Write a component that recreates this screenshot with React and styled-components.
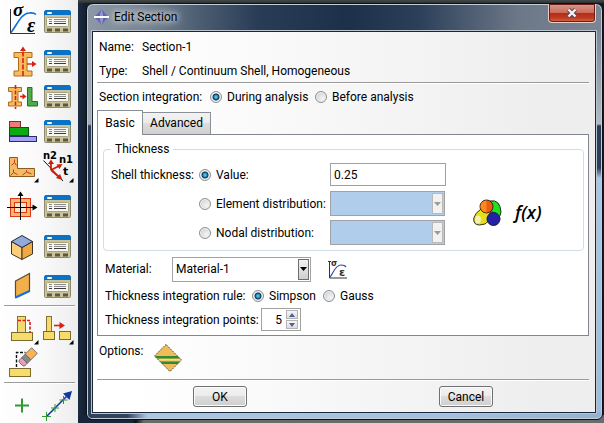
import React, { useState } from "react";
import styled, { createGlobalStyle, css } from "styled-components";

const GlobalStyle = createGlobalStyle`
  *, *::before, *::after { box-sizing: border-box; }
  body { margin: 0; }
  body, button, input, select {
    font-family: Roboto, "Open Sans", sans-serif;
    font-size: 12px;
    line-height: 16px;
    color: #000;
  }
`;

/* ---------- page ---------- */

const Page = styled.div`
  display: flex;
  min-height: 100vh;
  background: #17263b;
`;

const Toolbar = styled.aside`
  flex: none;
  width: 78px;
  padding: 5px 3px 1px 6px;
  background: linear-gradient(90deg, #fff, #f8f8f8 60%, #ededed);
`;

const ToolGroups = styled.div`
  display: flex;
  flex-direction: column;
  gap: ${(p) => p.$gap}px;
`;

const ToolRow = styled.div`
  display: flex;
  gap: 1px;
`;

const ToolButton = styled.button`
  display: flex;
  align-items: center;
  justify-content: center;
  width: 34px;
  height: 34px;
  padding: 0;
  border: 0;
  background: none;
`;

const ToolDivider = styled.hr`
  height: 2px;
  margin: 1px 0 4px -2px;
  border: 0;
  border-top: 1px solid #9c9c9c;
  border-bottom: 1px solid #fff;
`;

const Workspace = styled.main`
  flex: 1;
  min-width: 0;
  padding: 3px 1px 3px 8px;
  background:
    linear-gradient(#45494a, #2b3233) top / 100% 3px no-repeat,
    linear-gradient(100deg, #17263b 54px, #0d1116 58px, #6a6b6b 66px) bottom / 100% 8px no-repeat,
    linear-gradient(90deg, #1c2c43, #131f30 8px, #131a22);
`;

/* ---------- dialog frame ---------- */

const Dialog = styled.section`
  display: flex;
  flex-direction: column;
  padding: 0 6px 6px 5px;
  border: 1px solid #0b1119;
  border-radius: 7px 7px 6px 6px;
  box-shadow: inset 0 0 0 1px #c3cdd8;
  background:
    linear-gradient(90deg, #8d99a6 0, #748291 60px, #4e5f73 110px, #2a3d56 170px, #1d3049 260px, #2b3f59 330px, #6c7787 430px, #7b8594) top / 100% 28px no-repeat,
    linear-gradient(90deg, #30435c 40px, #a9c6e5 60px, #a1c0e3 70%, #93b1d3) bottom / 100% 7px no-repeat,
    linear-gradient(#8d99a6, #a4acb5 120px, #2c3e57 122px, #2a3c54) left / 8px 100% no-repeat,
    linear-gradient(#6c7787, #b3bac3 120px, #2c3e57 122px, #2c3e57 164px, #a9c6e5 174px, #9dbbdc) right / 8px 100% no-repeat;
`;

const TitleBar = styled.header`
  display: flex;
  align-items: flex-start;
  height: 27px;
  padding-left: 2px;
`;

const TitleText = styled.h1`
  display: flex;
  align-items: center;
  gap: 5px;
  flex: 1;
  height: 26px;
  margin: 0;
  font-size: 12px;
  font-weight: 400;
  text-shadow: 0 0 5px #dfe5ea, 0 0 8px #cfd6dd, 0 0 12px #c4ccd4;
`;

const CloseButton = styled.button`
  display: flex;
  align-items: center;
  justify-content: center;
  width: 48px;
  height: 19px;
  padding: 0;
  border: 1px solid #e6cdca;
  border-top: 0;
  border-radius: 0 0 4px 4px;
  box-shadow: inset 0 0 0 1px #6b2019;
  background: linear-gradient(#d99a8f, #cc6a5b 48%, #b52a14 50%, #bd3a20 75%, #d0694c);
`;

const Content = styled.div`
  padding: 3px 6px 0 4px;
  border: 1px solid #1b2737;
  outline: 1px solid #b9c3ce;
  background: linear-gradient(90deg, #fff 8%, #eeeeee 90%);
`;

const Row = styled.div`
  display: flex;
  align-items: center;
  height: ${(p) => p.$h || 24}px;
  padding-left: ${(p) => p.$indent || 0}px;
`;

const Label = styled.label`
  flex: none;
  width: ${(p) => (p.$w ? p.$w + "px" : "auto")};
  white-space: nowrap;
`;

const Value = styled.span`
  white-space: nowrap;
`;

const Divider = styled.hr`
  height: 2px;
  margin: 0;
  border: 0;
  border-top: 1px solid #9a9a9a;
  border-bottom: 1px solid #fff;
`;

/* ---------- form controls ---------- */

const RadioLabel = styled.label`
  display: flex;
  align-items: center;
  gap: 5px;
  flex: none;
  width: ${(p) => (p.$w ? p.$w + "px" : "auto")};
  white-space: nowrap;
`;

const RadioInput = styled.input.attrs({ type: "radio" })`
  appearance: none;
  flex: none;
  width: 12px;
  height: 12px;
  margin: 0;
  border: 1px solid #8c8f92;
  border-radius: 50%;
  box-shadow: inset 0 0 0 1px #f4f4f4;
  background: radial-gradient(circle at 65% 65%, #f4f4f4, #c4c8cc);

  &:checked {
    background: radial-gradient(circle, #7fd4f2 0, #1f86b4 2px, #0d3350 3px, #14405f 3px, #dfe3e6 4px);
  }
`;

const TextInput = styled.input`
  width: 116px;
  height: 23px;
  padding: 0 3px;
  border: 1px solid #a0a0a0;
  background: #fff;
`;

const SelectFrame = styled.span`
  display: grid;
  grid-template-columns: 1fr auto;
  align-items: center;
  width: ${(p) => p.$w}px;
  height: 25px;
  padding: 1px;
  border: 1px solid #a0a2a6;
  background: ${(p) => (p.$off ? "#b0cdec" : "#fff")};
`;

const NativeSelect = styled.select`
  appearance: none;
  grid-area: 1 / 1 / 2 / 3;
  width: 100%;
  height: 21px;
  padding: 0 14px 0 2px;
  border: 0;
  outline: 0;
  background: transparent;
`;

const ArrowBox = styled.span`
  grid-area: 1 / 2;
  display: flex;
  align-items: center;
  justify-content: center;
  width: 11px;
  height: 21px;
  pointer-events: none;
  ${(p) =>
    p.$off
      ? css`
          border: 1px solid #b9b9b9;
          background: #f2f2f2;
        `
      : css`
          border: 1px solid #6e6e6e;
          background: linear-gradient(#f2f2f2, #cfcfcf);
        `}
`;

const Spinner = styled.span`
  display: flex;
  align-items: center;
  width: 40px;
  height: 23px;
  padding: 1px 2px;
  border: 1px solid #a0a0a0;
  background: #fff;
`;

const SpinnerInput = styled.input`
  flex: 1;
  min-width: 0;
  height: 19px;
  padding: 0 4px 0 0;
  border: 0;
  background: none;
  text-align: right;
`;

const SpinnerButtons = styled.span`
  display: flex;
  flex-direction: column;
  gap: 1px;
`;

const SpinnerButton = styled.button`
  display: flex;
  align-items: center;
  justify-content: center;
  width: 12px;
  height: 9px;
  padding: 0;
  border: 1px solid #b4b4b4;
  background: linear-gradient(#f6f6f6, #dcdcdc);
`;

const IconButton = styled.button`
  display: flex;
  flex: none;
  padding: 0;
  border: 0;
  background: none;
`;

const PushButton = styled.button`
  width: 54px;
  height: 21px;
  padding: 0;
  border: 1px solid #707070;
  border-radius: 3px;
  box-shadow: inset 0 0 0 1px #fbfbfb;
  background: linear-gradient(#f3f3f3, #ebebeb 49%, #dcdcdc 50%, #cfcfcf);
`;

/* ---------- tabs and panel ---------- */

const TabList = styled.div`
  display: flex;
  align-items: flex-end;
  height: 24px;
`;

const Tab = styled.button`
  width: ${(p) => p.$w}px;
  height: ${(p) => (p.$active ? 25 : 22)}px;
  margin-bottom: ${(p) => (p.$active ? -1 : 0)}px;
  padding: 0 0 1px;
  border: 1px solid #8b8f98;
  border-bottom: 0;
  border-left-width: ${(p) => (p.$active ? 1 : 0)}px;
  background: ${(p) =>
    p.$active ? "#fff" : "linear-gradient(#f2f2f2, #ebebeb 49%, #dddddd 50%, #d0d0d0)"};
  position: relative;
`;

const TabPanel = styled.div`
  padding: 6px 4px 0 5px;
  border: 1px solid #82868f;
  background: #fff;
`;

const Group = styled.fieldset`
  display: grid;
  grid-template-columns: auto 1fr;
  align-items: center;
  min-width: 0;
  margin: 0;
  padding: 3px 8px 3px 7px;
  border: 1px solid #d3dde6;
  border-radius: 4px;
`;

const Legend = styled.legend`
  padding: 0 4px;
`;

const ThicknessRows = styled.div`
  display: flex;
  flex-direction: column;
`;

const FunctionTools = styled.div`
  display: flex;
  align-items: center;
  gap: 8px;
  padding: 18px 0 0 27px;
`;

const OptionsRow = styled.div`
  display: flex;
  align-items: flex-start;
  height: 43px;
  padding: 7px 0 0 2px;
`;

const Footer = styled.footer`
  display: grid;
  grid-template-columns: 1fr 1fr;
  justify-items: center;
  padding: 5px 0;
`;

/* ---------- icons ---------- */

const Icon = ({ children, w = 34, h = 34 }) => (
  <svg width={w} height={h} viewBox={`0 0 ${w} ${h}`} fill="none" overflow="visible" aria-hidden="true">
    {children}
  </svg>
);

const Corner = ({ y = 28 }) => <path d={`M32.500 ${y}v4.500h-4.500z`} fill="#000" />;

const ManagerIcon = () => (
  <Icon w={28} h={24}>
    <rect x="0.500" y="1.500" width="26" height="21" rx="1" fill="#c9c29c" stroke="#8d8a72" />
    <path d="M0 1.500 1.500 0h24L27 1.500V5H0z" fill="#0a72c4" />
    <rect x="3" y="2" width="5" height="2" rx="1" fill="#fff" />
    <rect x="2.500" y="7.500" width="22" height="9" rx="1" fill="#f6f6f2" stroke="#a8a480" />
    <path d="M5 9.500h3M10 9.500h12M5 11.500h3M10 11.500h12" stroke="#8a8a8a" />
    <path d="M5 13.500h3M10 13.500h12" stroke="#3c3c3c" />
    <path d="M3 18.500h5v3H3zM11 18.500h5v3h-5zM19 18.500h5v3h-5z" fill="#5f5836" />
  </Icon>
);

const StressStrainIcon = () => (
  <Icon>
    <path d="M4.500 4v24.500H29" stroke="#333" />
    <path d="M5 27.500C11 20 15 8.500 23 8q5-.5 7 1.500" stroke="#0b6fd6" strokeWidth="1.600" />
    <text x="7" y="11" fontFamily="Liberation Serif" fontSize="19" fontWeight="700" fontStyle="italic" fill="#000">σ</text>
    <text x="21" y="27" fontFamily="Liberation Serif" fontSize="20" fontWeight="700" fontStyle="italic" fill="#000">ε</text>
  </Icon>
);

const BeamSectionIcon = () => (
  <Icon>
    <path d="M8 7.500h18v5h-5V26h5v5H8v-5h4.500V12.500H8z" fill="#f7bc5c" stroke="#b06a1e" strokeLinejoin="round" />
    <path d="M17 31V5" stroke="#d8200e" strokeWidth="1.600" strokeDasharray="5 1.500" />
    <path d="M17 1.500 20 6h-6zM30.500 19 26 22v-6z" fill="#d8200e" />
    <path d="M21 19h6" stroke="#d8200e" strokeWidth="1.400" />
  </Icon>
);

const ProfileIcon = () => (
  <Icon>
    <path d="M2.500 7.500h13v4h-3.500V22h3.500v4h-13v-4H6V11.500H2.500z" fill="#f7bc5c" stroke="#b06a1e" />
    <path d="M9.500 5v24" stroke="#d8200e" strokeWidth="1.600" strokeDasharray="4 1.500" />
    <path d="M14 16.500h3" stroke="#d8200e" strokeWidth="1.600" />
    <path d="m20.500 16.500-4 3v-6z" fill="#d8200e" />
    <path d="M21.500 7.500h4.500v14h5.500V26h-10z" fill="#4eaa4b" stroke="#2a6b29" />
  </Icon>
);

const LayupIcon = () => (
  <Icon>
    <rect x="3.500" y="6.500" width="11" height="6" fill="#ee7d78" stroke="#7e2f2c" />
    <rect x="3.500" y="12.500" width="19" height="8" fill="#0cab14" stroke="#07590b" />
    <rect x="3.500" y="21.500" width="27" height="5" fill="#a4a2f8" stroke="#2c2b70" />
  </Icon>
);

const OrientationIcon = () => (
  <Icon>
    <path d="M3.500 7.500h8v11h17v8h-25z" fill="#f3bb63" stroke="#8b5a22" />
    <path d="M8.500 9.500v3l-3 3m3-3 2 3M7.500 19.500v3l-3 3m3-3 4 2M20.500 20v2l-4 3m4-3 5 2" stroke="#c93a16" />
    <Corner />
  </Icon>
);

const NormalTangentIcon = () => (
  <Icon>
    <path d="M2.500 10.500 22 31" stroke="#111" />
    <path d="M10 20v-8M10 20l8-4M10 20l8 7" stroke="#cc1d0c" strokeWidth="1.800" />
    <path d="m10 9.500 3 4.500H7zM21.500 14l-3 5-3-4.500zM21.500 30l-6.500-2 4-4z" fill="#cc1d0c" />
    <g fontFamily="DejaVu Sans" fontWeight="700" fontSize="10" fill="#000">
      <text x="2" y="9">n2</text>
      <text x="18" y="13">n1</text>
      <text x="22" y="25" fontSize="11">t</text>
    </g>
    <Corner />
  </Icon>
);

const SkinIcon = () => (
  <Icon>
    <rect x="4.500" y="8.500" width="20" height="18" fill="#f9b673" stroke="#da3a14" />
    <rect x="8.500" y="12.500" width="12" height="10" fill="#fbe3c8" stroke="#da3a14" />
    <path d="M14.500 5v25M1 17.500h27" stroke="#000" />
    <path d="m14.500 1.500 3 4.500h-6zM31.500 17.500l-5 3v-6z" fill="#000" />
  </Icon>
);

const CubeIcon = () => (
  <Icon>
    <path d="m5.500 11.500 10.500 6v12l-10.500-5.500z" fill="#fbce7c" stroke="#40352a" />
    <path d="m26.500 11.500-10.500 6v12L26.500 24z" fill="#efa941" stroke="#40352a" />
    <path d="m16 5.500 10.500 6-10.500 6-10.500-6z" fill="#92a9dc" stroke="#26283a" />
  </Icon>
);

const PlateIcon = () => (
  <Icon>
    <path d="m9.500 11 14-7.500V21l-14 6.500z" fill="#f2b04a" stroke="#5a4a35" strokeWidth="1.200" />
    <path d="m9.500 27.500 14-6.500" stroke="#1273dc" strokeWidth="2" />
  </Icon>
);

const FootingIcon = () => (
  <Icon>
    <rect x="11.500" y="5.500" width="8" height="16" fill="#f5db6e" stroke="#85742f" />
    <rect x="5.500" y="21.500" width="21" height="8" fill="#f7dc6b" stroke="#7a6c30" />
    <path d="M12 9.500h12v12" stroke="#d8200e" strokeWidth="1.600" strokeDasharray="3 1.500" />
    <Corner y={29} />
  </Icon>
);

const SplitIcon = () => (
  <Icon>
    <rect x="5.500" y="5.500" width="5" height="15" fill="#f5db6e" stroke="#85742f" />
    <rect x="2.500" y="20.500" width="11" height="8" fill="#f7dc6b" stroke="#7a6c30" />
    <rect x="18.500" y="20.500" width="11" height="8" fill="#f7dc6b" stroke="#7a6c30" />
    <path d="M13 14.500h7" stroke="#d8200e" strokeWidth="1.600" />
    <path d="m24 14.500-5.500 3.500v-7z" fill="#d8200e" />
    <Corner y={29} />
  </Icon>
);

const EraseIcon = () => (
  <Icon>
    <path d="M10.500 20V5.500h9" stroke="#111" strokeDasharray="3 1.500" strokeWidth="1.400" />
    <rect x="3.500" y="21.500" width="21" height="8" fill="#f7dc6b" stroke="#7a6c30" />
    <g transform="translate(15 17) rotate(-45)" stroke="#675b5b" strokeWidth="0.800">
      <rect x="0" y="-4" width="6" height="8" rx="2" fill="#e9a0b4" />
      <rect x="5" y="-4" width="5" height="8" fill="#7c8c99" />
      <rect x="10" y="-4" width="9" height="8" fill="#f6b457" />
    </g>
  </Icon>
);

const PointIcon = () => (
  <Icon>
    <path d="M16 10.500v14M9 17.500h14" stroke="#2f9a33" strokeWidth="2" />
  </Icon>
);

const DatumAxisIcon = () => (
  <Icon>
    <path d="m5.500 28.500 20-20" stroke="#12379a" strokeWidth="1.600" />
    <path d="m31 3-2.500 9L22 5.500z" fill="#12379a" />
    <path d="M5.500 24v9M1 28.500h9M14 16v8M10 20h8M22.500 8v8M18.500 12h8" stroke="#2f9a33" />
  </Icon>
);

const AppIcon = () => (
  <Icon w={15} h={16}>
    <path d="M7.500 0 11 4.500 15 8l-4 3.500L7.500 16 4 11.500 0 8l4-3.500z" fill="#6563ad" />
    <path d="M7.500 0 9 5v6l-1.500 5L6 11V5z" fill="#9695d0" />
    <path d="M0 8h15" stroke="#fff" strokeWidth="2" />
  </Icon>
);

const CloseIcon = () => (
  <Icon w={12} h={10}>
    <path d="m2.500 1.500 7 7m0-7-7 7" stroke="#5b4650" strokeWidth="4.400" />
    <path d="m2.500 1.500 7 7m0-7-7 7" stroke="#f4f4f6" strokeWidth="2.400" />
  </Icon>
);

const DistributionIcon = () => (
  <Icon w={31} h={30}>
    <path d="M17 3q10-2 11 11-1 8-8 6z" fill="#1fe321" stroke="#183318" />
    <path d="M8 11Q2 15 .8 20q-.8 7 5.700 7 6 .5 10-5l1-9z" fill="#e3df1c" stroke="#36361b" />
    <ellipse cx="5" cy="21.500" rx="3" ry="4" fill="#f4f2ac" />
    <circle cx="13.500" cy="8.500" r="6.500" fill="#ee5b16" stroke="#402014" />
    <path d="M13.500 2.500a6 6 0 0 0 0 12z" fill="#f98b1d" />
    <circle cx="20.500" cy="21" r="6.500" fill="#2420a8" stroke="#17173a" />
  </Icon>
);

const FunctionIcon = () => (
  <Icon w={34} h={26}>
    <text x="3" y="19" fontFamily="Open Sans" fontSize="18" fontWeight="600" fontStyle="italic" fill="#000">f(x)</text>
  </Icon>
);

const MaterialIcon = () => (
  <Icon w={19} h={19}>
    <path d="M1.500 1v17H19M0 1.500h3" stroke="#333" />
    <path d="M2 17C5 14 7 5 13 5q4 0 5 2" stroke="#3a45b0" strokeWidth="1.200" />
    <g fontFamily="DejaVu Sans" fontWeight="700" fill="#333">
      <text x="3" y="6" fontSize="8">σ</text>
      <text x="11" y="16" fontSize="11">ε</text>
    </g>
  </Icon>
);

const OptionsIcon = () => (
  <Icon w={30} h={30}>
    <path d="M13 1.500 28.500 17 17 28.500 1.500 13z" fill="#f0bb59" />
    <path d="M1.800 13H24.500l2.500 2.500H4zM7 18.500h20L24.500 21H9.500z" fill="#2f8c31" />
    <path d="M5 16H27.500l.8 1.500H6z" fill="#f6dc86" />
    <path d="M13 1.500 28.500 17 17 28.500 1.500 13z" stroke="#5c5238" strokeDasharray="2 1" />
  </Icon>
);

const Triangle = ({ up, w = 7, color = "#000" }) => (
  <svg width={w} height="4" viewBox="0 0 8 4" preserveAspectRatio="none" aria-hidden="true">
    <path d={up ? "M0 4h8L4 0z" : "M0 0h8L4 4z"} fill={color} />
  </svg>
);

/* ---------- composed parts ---------- */

const Tool = ({ name, icon: Glyph }) => (
  <ToolButton type="button" aria-label={name}>
    <Glyph />
  </ToolButton>
);

const ToolPair = ({ name, icon, second = ManagerIcon, secondName }) => (
  <ToolRow>
    <Tool name={name} icon={icon} />
    {second && <Tool name={secondName || `${name} manager`} icon={second} />}
  </ToolRow>
);

const Radio = ({ w, children, ...rest }) => (
  <RadioLabel $w={w}>
    <RadioInput {...rest} />
    {children}
  </RadioLabel>
);

const Select = ({ w, disabled, children, ...rest }) => (
  <SelectFrame $w={w} $off={disabled}>
    <NativeSelect disabled={disabled} {...rest}>
      {children}
    </NativeSelect>
    <ArrowBox $off={disabled}>
      <Triangle color={disabled ? "#9a9a9a" : "#000"} />
    </ArrowBox>
  </SelectFrame>
);

export default function App() {
  const [integration, setIntegration] = useState("during");
  const [source, setSource] = useState("value");
  const [rule, setRule] = useState("simpson");
  const [thickness, setThickness] = useState("0.25");
  const [points, setPoints] = useState(5);

  return (
    <>
      <GlobalStyle />
      <Page>
        <Toolbar aria-label="Property tools">
          <ToolGroups $gap={6}>
            <ToolPair name="Material" icon={StressStrainIcon} />
            <ToolGroups $gap={1}>
              <ToolPair name="Section" icon={BeamSectionIcon} />
              <ToolPair name="Profile" icon={ProfileIcon} />
              <ToolPair name="Composite layup" icon={LayupIcon} />
              <ToolPair
                name="Material orientation"
                icon={OrientationIcon}
                second={NormalTangentIcon}
                secondName="Normal and tangent"
              />
            </ToolGroups>
            <ToolPair name="Skin" icon={SkinIcon} />
            <ToolPair name="Solid" icon={CubeIcon} />
            <ToolPair name="Shell" icon={PlateIcon} />
          </ToolGroups>
          <ToolDivider />
          <ToolGroups $gap={2}>
            <ToolPair name="Partition" icon={FootingIcon} second={SplitIcon} secondName="Split" />
            <ToolPair name="Erase" icon={EraseIcon} second={null} />
          </ToolGroups>
          <ToolDivider />
          <ToolPair name="Datum point" icon={PointIcon} second={DatumAxisIcon} secondName="Datum axis" />
        </Toolbar>

        <Workspace>
          <Dialog role="dialog" aria-labelledby="dialog-title">
            <TitleBar>
              <TitleText id="dialog-title">
                <AppIcon />
                Edit Section
              </TitleText>
              <CloseButton type="button" aria-label="Close">
                <CloseIcon />
              </CloseButton>
            </TitleBar>

            <Content>
              <Row $indent={2}>
                <Label as="span" $w={43}>Name:</Label>
                <Value>Section-1</Value>
              </Row>
              <Row $h={23} $indent={2}>
                <Label as="span" $w={43}>Type:</Label>
                <Value>Shell / Continuum Shell, Homogeneous</Value>
              </Row>
              <Divider />
              <Row $h={26} $indent={2} role="radiogroup" aria-labelledby="integration">
                <Label as="span" id="integration" $w={111}>Section integration:</Label>
                <Radio w={105} name="integration" checked={integration === "during"} onChange={() => setIntegration("during")}>
                  During analysis
                </Radio>
                <Radio name="integration" checked={integration === "before"} onChange={() => setIntegration("before")}>
                  Before analysis
                </Radio>
              </Row>

              <TabList role="tablist">
                <Tab type="button" role="tab" aria-selected="true" $active $w={46}>Basic</Tab>
                <Tab type="button" role="tab" aria-selected="false" $w={68}>Advanced</Tab>
              </TabList>
              <TabPanel role="tabpanel">
                <Group>
                  <Legend>Thickness</Legend>
                  <ThicknessRows>
                    <Row $h={29} $indent={0}>
                      <Label as="span" $w={88}>Shell thickness:</Label>
                      <Radio w={131} name="source" checked={source === "value"} onChange={() => setSource("value")}>
                        Value:
                      </Radio>
                      <TextInput aria-label="Thickness value" value={thickness} onChange={(e) => setThickness(e.target.value)} />
                    </Row>
                    <Row $h={29} $indent={88}>
                      <Radio w={131} name="source" checked={source === "element"} onChange={() => setSource("element")}>
                        Element distribution:
                      </Radio>
                      <Select w={115} disabled={source !== "element"} aria-label="Element distribution" />
                    </Row>
                    <Row $h={29} $indent={88}>
                      <Radio w={131} name="source" checked={source === "nodal"} onChange={() => setSource("nodal")}>
                        Nodal distribution:
                      </Radio>
                      <Select w={115} disabled={source !== "nodal"} aria-label="Nodal distribution" />
                    </Row>
                  </ThicknessRows>
                  <FunctionTools>
                    <IconButton type="button" aria-label="Create discrete field">
                      <DistributionIcon />
                    </IconButton>
                    <IconButton type="button" aria-label="Create expression">
                      <FunctionIcon />
                    </IconButton>
                  </FunctionTools>
                </Group>

                <Row $h={36} $indent={2}>
                  <Label htmlFor="material" $w={67}>Material:</Label>
                  <Select w={139} id="material">
                    <option>Material-1</option>
                  </Select>
                  <Row $indent={17}>
                    <IconButton type="button" aria-label="Create material">
                      <MaterialIcon />
                    </IconButton>
                  </Row>
                </Row>
                <Row $h={17} $indent={2} role="radiogroup" aria-labelledby="rule">
                  <Label as="span" id="rule" $w={147}>Thickness integration rule:</Label>
                  <Radio w={71} name="rule" checked={rule === "simpson"} onChange={() => setRule("simpson")}>
                    Simpson
                  </Radio>
                  <Radio name="rule" checked={rule === "gauss"} onChange={() => setRule("gauss")}>
                    Gauss
                  </Radio>
                </Row>
                <Row $h={31} $indent={2}>
                  <Label htmlFor="points" $w={156}>Thickness integration points:</Label>
                  <Spinner>
                    <SpinnerInput id="points" inputMode="numeric" value={points} onChange={(e) => setPoints(Number(e.target.value) || 0)} />
                    <SpinnerButtons>
                      <SpinnerButton type="button" aria-label="Increase" onClick={() => setPoints(points + 2)}>
                        <Triangle up w={6} color="#4d5f9e" />
                      </SpinnerButton>
                      <SpinnerButton type="button" aria-label="Decrease" onClick={() => setPoints(Math.max(1, points - 2))}>
                        <Triangle w={6} color="#4d5f9e" />
                      </SpinnerButton>
                    </SpinnerButtons>
                  </Spinner>
                </Row>
              </TabPanel>

              <OptionsRow>
                <Label as="span" $w={54}>Options:</Label>
                <IconButton type="button" aria-label="Section options">
                  <OptionsIcon />
                </IconButton>
              </OptionsRow>
              <Divider />
              <Footer>
                <PushButton type="button">OK</PushButton>
                <PushButton type="button">Cancel</PushButton>
              </Footer>
            </Content>
          </Dialog>
        </Workspace>
      </Page>
    </>
  );
}
